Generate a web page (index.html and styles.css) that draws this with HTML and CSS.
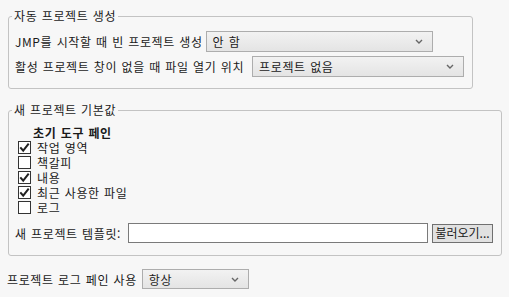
FILE: index.html
```html
<!DOCTYPE html>
<html lang="ko">

<head>
    <meta charset="UTF-8">
    <title>프로젝트 환경설정</title>
    <link rel="stylesheet" href="styles.css">
</head>

<body>
    <fieldset class="group group-auto">
        <legend>자동 프로젝트 생성</legend>
        <div class="row">
            <span class="label label-start">JMP를 시작할 때 빈 프로젝트 생성</span>
            <div class="select select-start">
                <span>안 함</span>
                <svg class="chev" width="8" height="5" viewBox="0 0 8 5"><path d="M1 1 L4 4 L7 1" fill="none" stroke="#666" stroke-width="1.4"/></svg>
            </div>
        </div>
        <div class="row">
            <span class="label label-open">활성 프로젝트 창이 없을 때 파일 열기 위치</span>
            <div class="select select-open">
                <span>프로젝트 없음</span>
                <svg class="chev" width="8" height="5" viewBox="0 0 8 5"><path d="M1 1 L4 4 L7 1" fill="none" stroke="#666" stroke-width="1.4"/></svg>
            </div>
        </div>
    </fieldset>

    <fieldset class="group group-new">
        <legend>새 프로젝트 기본값</legend>
        <div class="pane-title">초기 도구 페인</div>
        <ul class="checks">
            <li><span class="box"><svg width="11" height="11" viewBox="0 0 11 11"><path d="M1.3 5.3 L4.2 8.6 L9.7 1.6" fill="none" stroke="#222" stroke-width="2"/></svg></span>작업 영역</li>
            <li><span class="box"></span>책갈피</li>
            <li><span class="box"><svg width="11" height="11" viewBox="0 0 11 11"><path d="M1.3 5.3 L4.2 8.6 L9.7 1.6" fill="none" stroke="#222" stroke-width="2"/></svg></span>내용</li>
            <li><span class="box"><svg width="11" height="11" viewBox="0 0 11 11"><path d="M1.3 5.3 L4.2 8.6 L9.7 1.6" fill="none" stroke="#222" stroke-width="2"/></svg></span>최근 사용한 파일</li>
            <li><span class="box"></span>로그</li>
        </ul>
        <div class="template-row">
            <span class="label">새 프로젝트 템플릿:</span>
            <div class="text-input"></div>
            <button class="browse">불러오기...</button>
        </div>
    </fieldset>

    <div class="row log-row">
        <span class="label">프로젝트 로그 페인 사용</span>
        <div class="select select-log">
            <span>항상</span>
            <svg class="chev" width="8" height="5" viewBox="0 0 8 5"><path d="M1 1 L4 4 L7 1" fill="none" stroke="#666" stroke-width="1.4"/></svg>
        </div>
    </div>
</body>

</html>
```

FILE: styles.css
```css
body {
    font-family: "Noto Sans CJK KR", "Noto Sans", sans-serif;
    font-size: 12px;
    line-height: 15px;
    letter-spacing: 0.6px;
    word-spacing: 0.5px;
    color: #1a1a1a;
    background-color: #f7f7f7;
    margin: 0;
    padding: 0;
}

.group {
    border: 1px solid #c3c3c3;
    border-radius: 3px;
    margin: 8px 0 0 8px;
    padding: 7px 6px 11px 6px;
    box-sizing: border-box;
}

.group legend {
    padding: 0 2px;
    margin-left: -3px;
    line-height: 16px;
}

.group-auto {
    width: 465px;
}

.group-new {
    width: 494px;
    margin-top: 13px;
    padding-bottom: 12px;
}

.row {
    display: flex;
    align-items: center;
    height: 21px;
}

.row + .row {
    margin-top: 4px;
}

.label {
    white-space: nowrap;
    margin-right: 5px;
}

.label-start {
    margin-right: 3px;
}

.label-open {
    margin-right: 8px;
}

.select {
    display: flex;
    align-items: center;
    justify-content: space-between;
    box-sizing: border-box;
    height: 21px;
    padding: 0 9px 0 6px;
    border: 1px solid #adadad;
    background: linear-gradient(#f2f2f2, #e4e4e4);
}

.select-start {
    width: 227px;
}

.select-open {
    width: 212px;
}

.select-log {
    width: 107px;
    height: 20px;
}

.pane-title {
    font-weight: bold;
    padding-left: 18px;
    height: 15px;
}

.checks {
    list-style: none;
    margin: 0;
    padding: 0 0 0 3px;
}

.checks li {
    display: flex;
    align-items: center;
    height: 15px;
}

.box {
    width: 13px;
    height: 13px;
    box-sizing: border-box;
    border: 1px solid #333;
    background-color: white;
    margin-right: 6px;
    display: flex;
    align-items: center;
    justify-content: center;
}

.template-row {
    display: flex;
    align-items: center;
    margin-top: 8px;
    height: 20px;
}

.template-row .label {
    margin-right: 7px;
}

.text-input {
    width: 300px;
    height: 20px;
    box-sizing: border-box;
    border: 1px solid #7a7a7a;
    background-color: white;
}

.browse {
    font-family: inherit;
    font-size: 12px;
    letter-spacing: 0;
    color: #1a1a1a;
    margin-left: 4px;
    width: 61px;
    height: 19px;
    padding: 0;
    border: 1px solid #707070;
    background-color: #e1e1e1;
    line-height: 16px;
}

.log-row {
    margin: 13px 0 0 7px;
    height: 20px;
}
```
